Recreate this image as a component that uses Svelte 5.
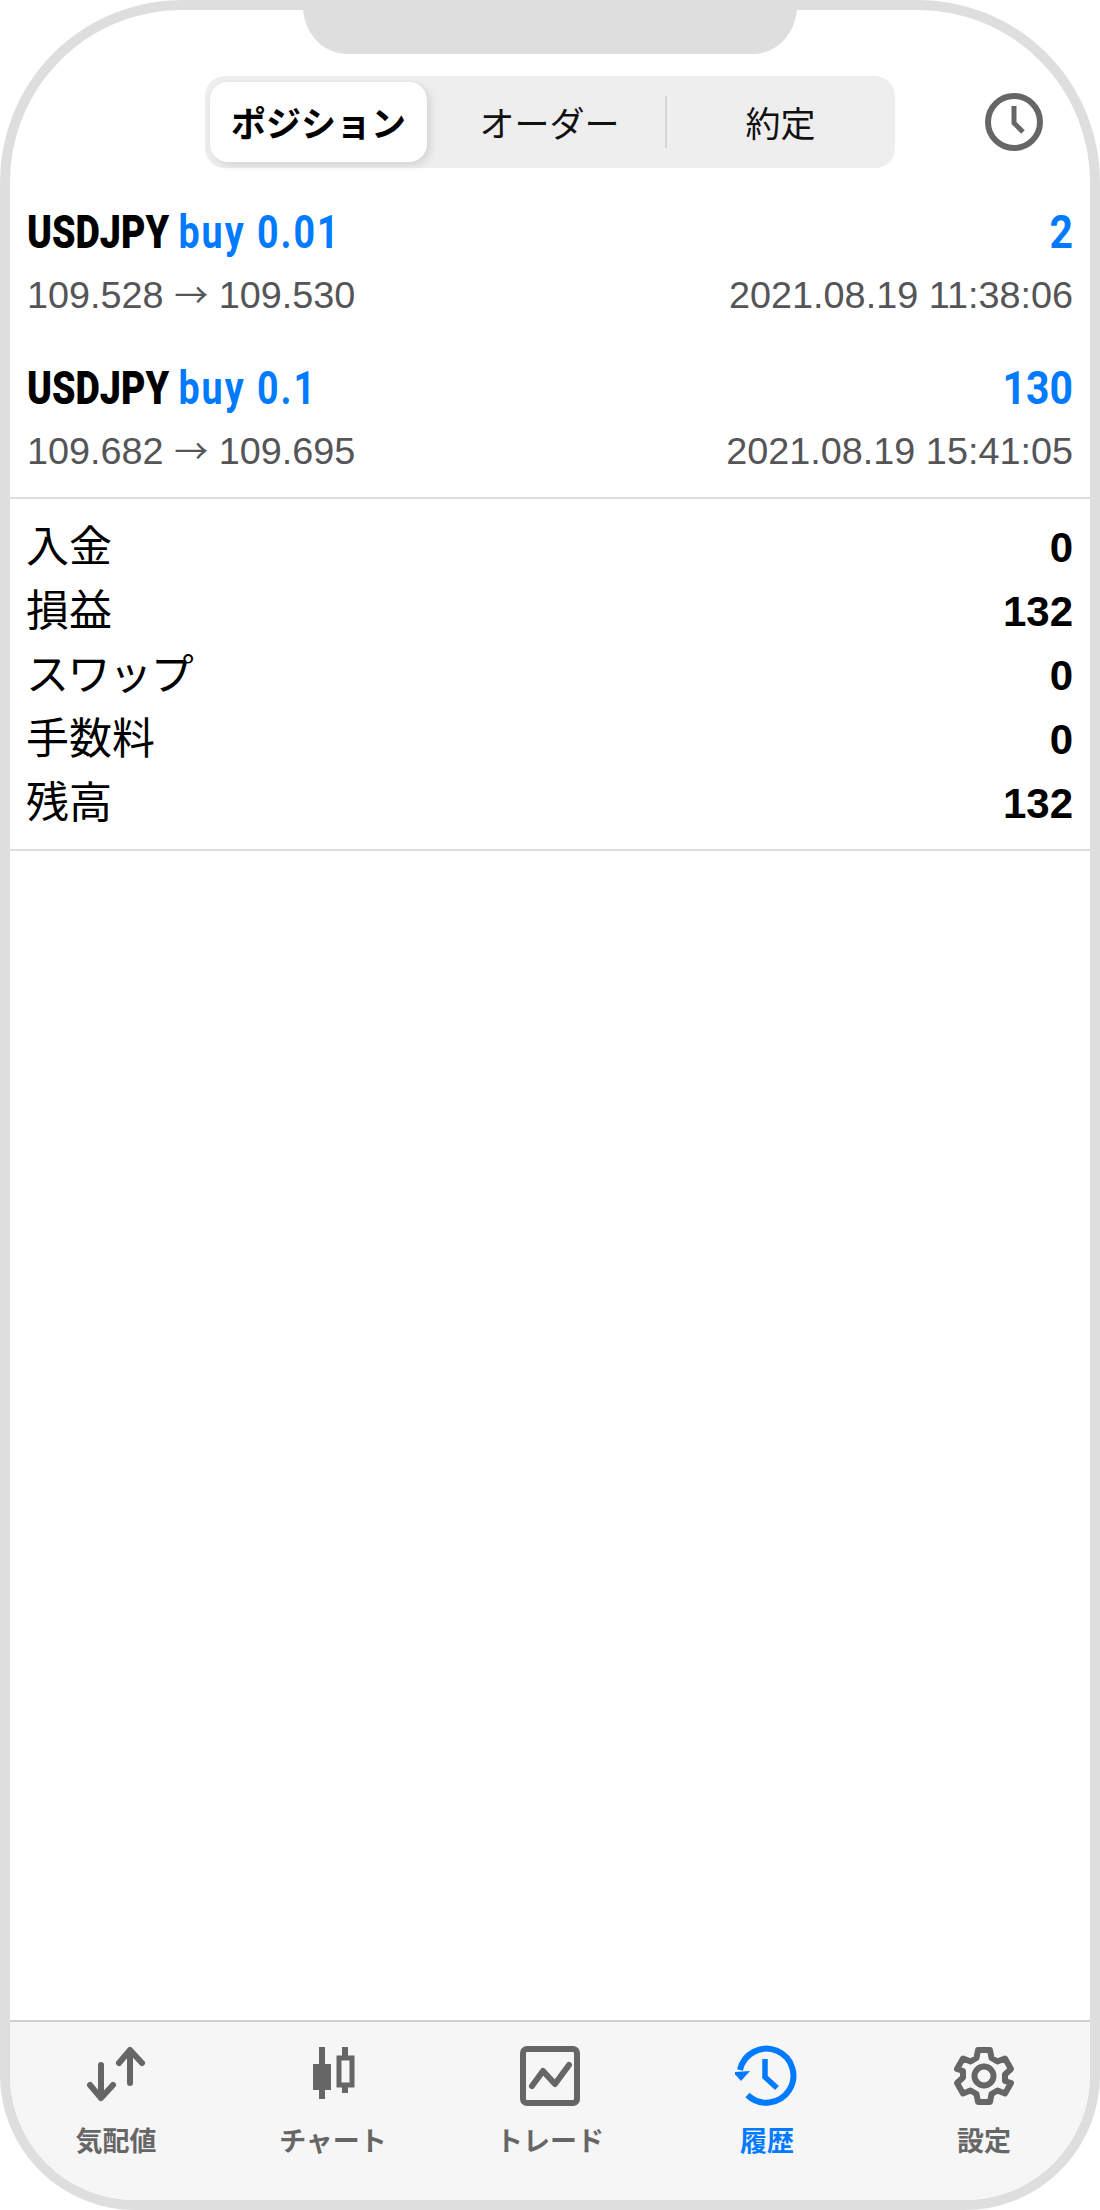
<script>
  const tabs = [
    { id: 'quotes', label: '気配値' },
    { id: 'chart', label: 'チャート' },
    { id: 'trade', label: 'トレード' },
    { id: 'history', label: '履歴', active: true },
    { id: 'settings', label: '設定' }
  ];
  const deals = [
    { side: 'buy 0.01', profit: '2', prices: ['109.528', '109.530'], time: '2021.08.19 11:38:06' },
    { side: 'buy 0.1', profit: '130', prices: ['109.682', '109.695'], time: '2021.08.19 15:41:05' }
  ];
  const summary = [
    ['入金', '0'],
    ['損益', '132'],
    ['スワップ', '0', true],
    ['手数料', '0'],
    ['残高', '132']
  ];
</script>

<div class="phone">
  <div class="notch"></div>

  <header class="top">
    <div class="segments">
      <div class="seg selected">ポジション</div>
      <div class="seg second">オーダー</div>
      <div class="seg third">約定</div>
    </div>
    <svg class="clock" width="60" height="60" viewBox="0 0 60 60" fill="none" stroke="#666">
      <circle cx="30" cy="30" r="26" stroke-width="6" />
      <path d="M30 14V31L39 40" stroke-width="5" />
    </svg>
  </header>

  <section class="deals">
    {#each deals as d}
      <div class="deal">
        <div class="line title">
          <span class="name"><b>USDJPY</b> <em>{d.side}</em></span>
          <em class="profit">{d.profit}</em>
        </div>
        <div class="line sub">
          <span>{d.prices[0]} <i>→</i> {d.prices[1]}</span>
          <span>{d.time}</span>
        </div>
      </div>
    {/each}
  </section>

  <section class="summary">
    {#each summary as s}
      <div class="line stat">
        <span class="k" class:kana={s[2]}>{s[0]}</span>
        <span class="v">{s[1]}</span>
      </div>
    {/each}
  </section>

  <nav class="tabbar">
    {#each tabs as t}
      <div class="tab" class:active={t.active}>
        <svg width="64" height="64" viewBox="0 0 64 64" fill="none" stroke="currentColor" stroke-width="6">
          {#if t.id === 'quotes'}
            <path d="M17 21V53M6 41L17 54L29 41" stroke-linecap="round" stroke-linejoin="round" />
            <path d="M46 7V39M35 19L46 6L58 19" stroke-linecap="round" stroke-linejoin="round" />
          {:else if t.id === 'chart'}
            <path d="M21 3V55" />
            <rect x="12" y="20" width="18" height="26" fill="currentColor" stroke="none" />
            <path d="M44 3V49" />
            <rect x="38" y="14" width="13" height="27" fill="#f6f6f7" stroke-width="5" />
          {:else if t.id === 'trade'}
            <rect x="5" y="5" width="54" height="54" rx="4" />
            <path d="M14 42L25 27L37 40L51 21" stroke-linecap="round" stroke-linejoin="round" />
          {:else if t.id === 'history'}
            <path d="M12.5 51A27 27 0 1 0 5 26" />
            <path d="M-2 28L15 27L6 37Z" fill="currentColor" stroke="none" />
            <path d="M30 15V33L42 44" stroke-width="5.5" />
          {:else}
            <path d="M26 6H38L39.5 14L45.5 17.5L53 14.5L59 25L53 30.5V37L59 39L53 49.5L45.5 46.5L39.5 50L38 58H26L24.5 50L18.5 46.5L11 49.5L5 39L11 33.5V27L5 25L11 14.5L18.5 17.5L24.5 14Z" stroke-linejoin="round" />
            <circle cx="32" cy="32" r="9.5" />
          {/if}
        </svg>
        <span>{t.label}</span>
      </div>
    {/each}
  </nav>
</div>

<style>
  :global(body) {
    background: #fff;
  }
  .phone {
    position: relative;
    box-sizing: border-box;
    width: 1100px;
    height: 2210px;
    border: 10px solid #dedede;
    border-radius: 182px 182px 135px 135px;
    overflow: hidden;
    display: flex;
    flex-direction: column;
    background: #fff;
    font-family: "Liberation Sans", "Noto Sans CJK JP", sans-serif;
  }
  .notch {
    position: absolute;
    left: 293px;
    top: -10px;
    width: 494px;
    height: 54px;
    background: #dedede;
    border-radius: 0 0 44px 44px / 0 0 48px 48px;
  }
  .top {
    display: flex;
    align-items: center;
    height: 158px;
    padding: 66px 0 0 195px;
    box-sizing: border-box;
  }
  .segments {
    display: grid;
    grid-template-columns: 217px 238px 225px;
    align-items: center;
    box-sizing: border-box;
    width: 690px;
    height: 92px;
    padding: 0 5px;
    background: #eeeeee;
    border-radius: 20px;
    font-family: "Noto Sans CJK JP", sans-serif;
    font-size: 35px;
    color: #111;
  }
  .seg {
    display: flex;
    align-items: center;
    justify-content: center;
    height: 80px;
    padding-bottom: 2px;
    box-sizing: border-box;
  }
  .selected {
    background: #fff;
    border-radius: 18px;
    box-shadow: 3px 3px 8px rgba(0, 0, 0, 0.12);
    font-weight: 700;
    color: #000;
  }
  .second {
    padding-left: 7px;
  }
  .third {
    height: 52px;
    border-left: 2px solid #d6d6d6;
    padding-left: 4px;
  }
  .clock {
    margin-left: 89px;
  }
  .deals {
    padding: 33px 0 0;
    height: 331px;
    box-sizing: border-box;
    border-bottom: 2px solid #dddddd;
  }
  .line {
    display: flex;
    justify-content: space-between;
    align-items: baseline;
    padding: 0 17px;
  }
  .deal {
    height: 156px;
  }
  .title {
    height: 62px;
    line-height: 62px;
    font-size: 47px;
    font-family: Roboto, sans-serif;
    font-weight: 700;
  }
  .name {
    display: inline-block;
    transform: scaleX(0.8);
    transform-origin: left center;
    white-space: nowrap;
  }
  .name em {
    letter-spacing: 2.5px;
  }
  .profit {
    display: inline-block;
    transform: scaleX(0.87);
    transform-origin: right center;
  }
  .title b {
    color: #000;
  }
  em {
    font-style: normal;
    color: #007aff;
  }
  .sub {
    height: 57px;
    line-height: 62px;
    font-size: 37.8px;
    color: #555558;
  }
  .sub i {
    font-style: normal;
    font-size: 34px;
    font-family: "Noto Sans CJK JP", sans-serif;
  }
  .summary {
    box-sizing: border-box;
    height: 352px;
    padding-top: 12px;
    border-bottom: 2px solid #dddddd;
  }
  .stat {
    height: 64px;
    line-height: 64px;
    color: #000;
    padding-left: 16px;
  }
  .k {
    font-family: "Noto Sans CJK JP", sans-serif;
    font-size: 43px;
  }
  .kana {
    letter-spacing: -1.4px;
  }
  .v {
    font-size: 42px;
    font-weight: 700;
  }
  .tabbar {
    box-sizing: border-box;
    margin-top: auto;
    height: 180px;
    background: #f6f6f7;
    border-top: 2px solid #cfcfcf;
    display: grid;
    grid-template-columns: repeat(5, 217px);
    justify-content: center;
    padding-top: 22px;
    color: #666;
  }
  .tab {
    display: flex;
    flex-direction: column;
    align-items: center;
    font-family: "Noto Sans CJK JP", sans-serif;
    font-size: 27px;
    font-weight: 700;
    line-height: 36px;
  }
  .tab span {
    margin-top: 14px;
  }
  .active {
    color: #007aff;
  }
</style>
